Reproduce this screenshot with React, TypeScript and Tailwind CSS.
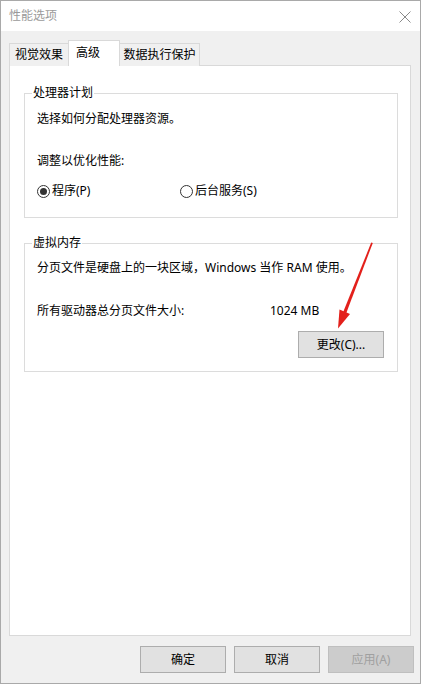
import React from 'react'

const font = { fontFamily: '"Noto Sans", "Noto Sans CJK SC", sans-serif' }

type GroupProps = {
  title: string
  className?: string
  children: React.ReactNode
}

const GroupBox: React.FC<GroupProps> = ({ title, className, children }) => (
  <fieldset className={'mx-[14px] w-[374px] border border-[#dcdcdc] ' + (className ?? '')}>
    <legend className="ml-[7px] px-[1px] text-[12px] leading-[16px] text-black">{title}</legend>
    {children}
  </fieldset>
)

const Radio: React.FC<{ checked?: boolean; label: string; className?: string }> = ({
  checked,
  label,
  className
}) => (
  <div className={'flex items-center ' + (className ?? '')}>
    <span className="flex h-[13px] w-[13px] items-center justify-center rounded-full border border-[#333333] bg-white">
      {checked && <span className="h-[7px] w-[7px] rounded-full bg-[#333333]" />}
    </span>
    <span className="ml-[2px] text-[12px] leading-[16px]">{label}</span>
  </div>
)

const DialogButton: React.FC<{ label: string; disabled?: boolean; className?: string }> = ({
  label,
  disabled,
  className
}) => (
  <button
    disabled={disabled}
    className={
      'h-[27px] w-[86px] border text-[12px] leading-[16px] ' +
      (disabled
        ? 'border-[#bfbfbf] bg-[#cccccc] text-[#a0a0a0] '
        : 'border-[#adadad] bg-[#e1e1e1] text-black ') +
      (className ?? '')
    }
  >
    {label}
  </button>
)

const App: React.FC = () => {
  return (
    <div className="relative h-[685px] w-[421px] bg-white" style={font}>
      <div className="flex h-[684px] w-[421px] flex-col border border-[#a9a9a9]">
        {/* title bar */}
        <div className="flex h-[30px] items-center justify-between bg-white pl-[8px] pr-[9px]">
          <span className="text-[12px] leading-[16px] text-[#9a9a9a]">性能选项</span>
          <svg width="12" height="12" viewBox="0 0 12 12" className="mt-[2px]">
            <path d="M0.5 0.5 L11.5 11.5 M11.5 0.5 L0.5 11.5" stroke="#8a8a8a" strokeWidth="1" />
          </svg>
        </div>

        <div className="flex flex-1 flex-col bg-[#f0f0f0] px-[8px]">
          {/* tabs */}
          <div className="relative z-10 mt-[9px] flex h-[25px] items-end text-[12px] leading-[16px]">
            <div className="-mb-px flex h-[23px] w-[60px] items-center justify-center border border-b-0 border-[#d9d9d9] bg-[#f0f0f0]">
              视觉效果
            </div>
            <div className="-mb-px -ml-px flex h-[26px] w-[52px] items-center border border-b-0 border-[#d9d9d9] bg-white pb-[2px] pl-[7px]">
              高级
            </div>
            <div className="-mb-px -ml-px flex h-[23px] w-[81px] items-center justify-center border border-b-0 border-[#d9d9d9] bg-[#f0f0f0]">
              数据执行保护
            </div>
          </div>

          {/* tab page */}
          <div className="h-[571px] w-[402px] border border-[#d9d9d9] bg-white pt-[19px] text-black">
            <GroupBox title="处理器计划">
              <div className="px-[12px] pb-[18px] pt-[10px]">
                <p className="text-[12px] leading-[16px]">选择如何分配处理器资源。</p>
                <p className="mt-[26px] text-[12px] leading-[16px]">调整以优化性能:</p>
                <div className="mt-[14px] flex">
                  <Radio checked label="程序(P)" className="w-[143px]" />
                  <Radio label="后台服务(S)" />
                </div>
              </div>
            </GroupBox>

            <GroupBox title="虚拟内存" className="mt-[17px]">
              <div className="px-[12px] pb-[13px] pt-[9px]">
                <p className="text-[12px] leading-[16px]">分页文件是硬盘上的一块区域，Windows 当作 RAM 使用。</p>
                <div className="mt-[27px] flex text-[12px] leading-[16px]">
                  <span className="w-[233px]">所有驱动器总分页文件大小:</span>
                  <span>1024 MB</span>
                </div>
                <div className="mt-[12px] flex justify-end">
                  <DialogButton label="更改(C)..." className="mr-[1px] w-[85px]" />
                </div>
              </div>
            </GroupBox>
          </div>

          {/* footer buttons */}
          <div className="mt-[10px] flex justify-end gap-[8px]">
            <DialogButton label="确定" />
            <DialogButton label="取消" />
            <DialogButton label="应用(A)" disabled className="mr-[-2px]" />
          </div>
        </div>
      </div>

      {/* red annotation arrow */}
      <svg
        className="pointer-events-none absolute left-0 top-0"
        width="421"
        height="685"
        viewBox="0 0 421 685"
      >
        <polygon points="372.8,243 371.2,242.6 343.2,312 346.2,313.2" fill="#e3201b" />
        <polygon points="338,328.5 350,314 339.5,309.6" fill="#e3201b" />
      </svg>
    </div>
  )
}

export default App
